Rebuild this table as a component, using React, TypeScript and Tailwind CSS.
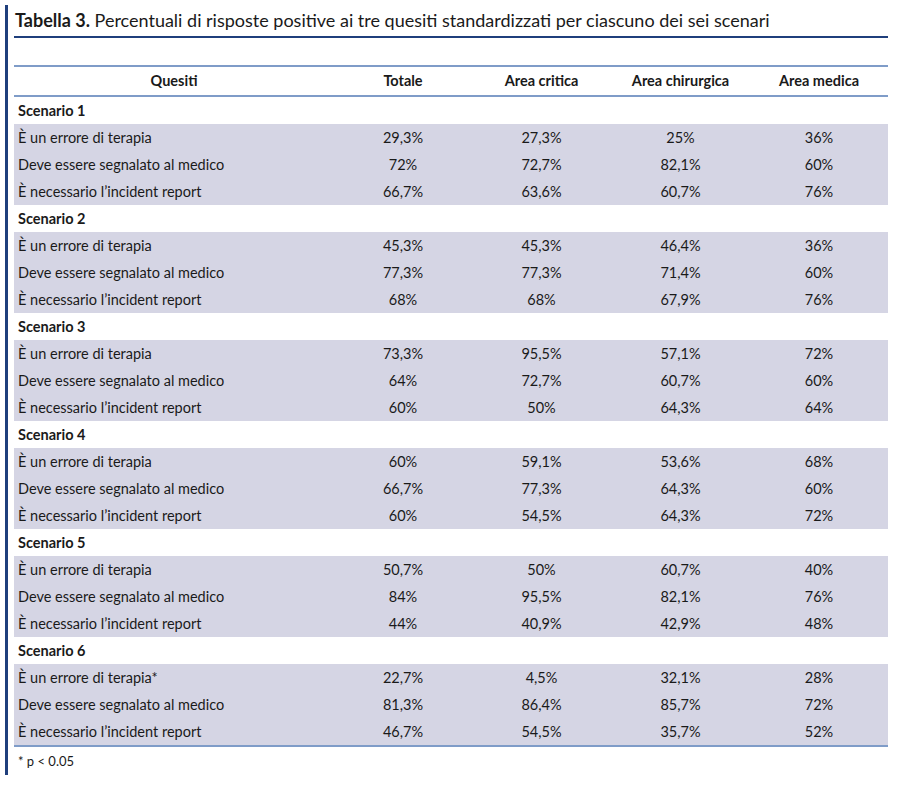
import React from "react";

const scenarios: { name: string; rows: [string, string, string, string, string][] }[] = [
  { name: "Scenario 1", rows: [
    ["È un errore di terapia", "29,3%", "27,3%", "25%", "36%"],
    ["Deve essere segnalato al medico", "72%", "72,7%", "82,1%", "60%"],
    ["È necessario l’incident report", "66,7%", "63,6%", "60,7%", "76%"],
  ]},
  { name: "Scenario 2", rows: [
    ["È un errore di terapia", "45,3%", "45,3%", "46,4%", "36%"],
    ["Deve essere segnalato al medico", "77,3%", "77,3%", "71,4%", "60%"],
    ["È necessario l’incident report", "68%", "68%", "67,9%", "76%"],
  ]},
  { name: "Scenario 3", rows: [
    ["È un errore di terapia", "73,3%", "95,5%", "57,1%", "72%"],
    ["Deve essere segnalato al medico", "64%", "72,7%", "60,7%", "60%"],
    ["È necessario l’incident report", "60%", "50%", "64,3%", "64%"],
  ]},
  { name: "Scenario 4", rows: [
    ["È un errore di terapia", "60%", "59,1%", "53,6%", "68%"],
    ["Deve essere segnalato al medico", "66,7%", "77,3%", "64,3%", "60%"],
    ["È necessario l’incident report", "60%", "54,5%", "64,3%", "72%"],
  ]},
  { name: "Scenario 5", rows: [
    ["È un errore di terapia", "50,7%", "50%", "60,7%", "40%"],
    ["Deve essere segnalato al medico", "84%", "95,5%", "82,1%", "76%"],
    ["È necessario l’incident report", "44%", "40,9%", "42,9%", "48%"],
  ]},
  { name: "Scenario 6", rows: [
    ["È un errore di terapia*", "22,7%", "4,5%", "32,1%", "28%"],
    ["Deve essere segnalato al medico", "81,3%", "86,4%", "85,7%", "72%"],
    ["È necessario l’incident report", "46,7%", "54,5%", "35,7%", "52%"],
  ]},
];

const cols = "grid grid-cols-[320px_138px_139px_139px_138px]";

export default function App() {
  return (
    <div
      className="w-[900px] h-[785px] bg-white text-[#1a1a1a] relative"
      style={{ fontFamily: "Lato, 'Open Sans', sans-serif" }}
    >
      <div className="flex pt-[5px] h-[775px]">
        <div className="ml-[5px] w-[3px] bg-[#1f3f7c]" />
        <div className="ml-[6px] w-[874px] flex flex-col">
          <div className="h-[31px] flex items-end pb-[5px] text-[18px] leading-[22px] pl-[1px]">
            <span className="font-bold">Tabella 3.</span>
            <span>&nbsp;Percentuali di risposte positive ai tre quesiti standardizzati per ciascuno dei sei scenari</span>
          </div>
          <div className="h-[2px] bg-[#1f3f7c]" />
          <div className="h-[27px]" />
          <div className="h-[2px] bg-[#7f9cc8]" />
          <div className={`${cols} h-[28px] items-center font-bold text-[14.5px]`}>
            <div className="text-center">Quesiti</div>
            <div className="text-center">Totale</div>
            <div className="text-center">Area critica</div>
            <div className="text-center">Area chirurgica</div>
            <div className="text-center">Area medica</div>
          </div>
          <div className="h-[2px] bg-[#7f9cc8]" />
          {scenarios.map((s) => (
            <div key={s.name}>
              <div className="h-[27px] flex items-center pl-[4px] font-bold text-[14.5px]">{s.name}</div>
              <div className="bg-[#d5d5e4]">
                {s.rows.map((r, i) => (
                  <div key={i} className={`${cols} h-[27px] items-center text-[14.5px]`}>
                    <div className="pl-[4px]">{r[0]}</div>
                    <div className="text-center">{r[1]}</div>
                    <div className="text-center">{r[2]}</div>
                    <div className="text-center">{r[3]}</div>
                    <div className="text-center">{r[4]}</div>
                  </div>
                ))}
              </div>
            </div>
          ))}
          <div className="h-[2px] bg-[#7f9cc8]" />
          <div className="pl-[4px] pt-[6px] text-[13px] leading-[16px]">* p &lt; 0.05</div>
        </div>
      </div>
    </div>
  );
}
